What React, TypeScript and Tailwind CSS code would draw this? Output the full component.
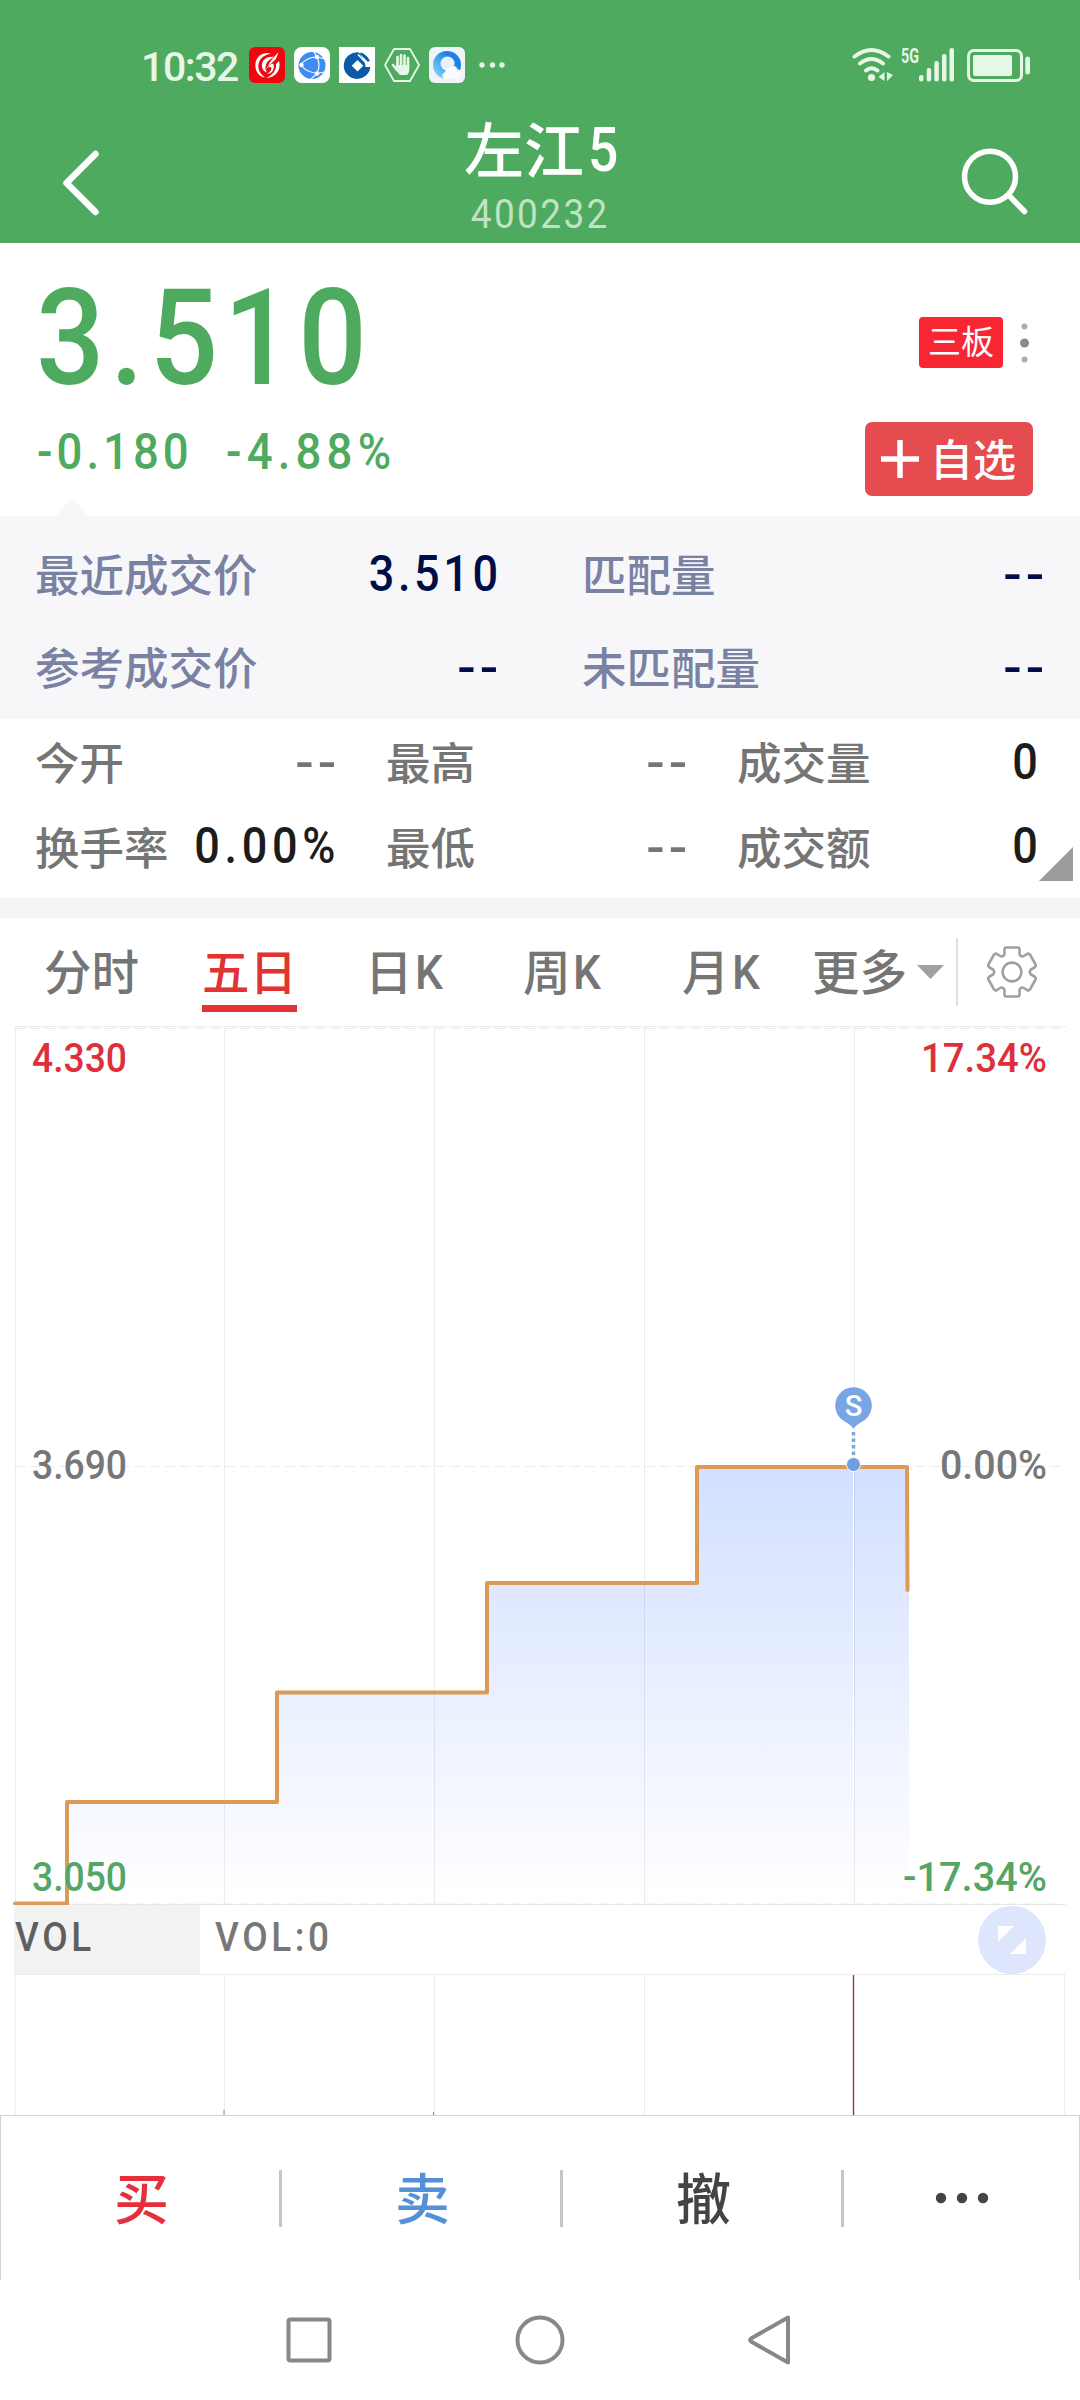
import type { ReactNode } from 'react'

const CJK = 'font-["Noto_Sans_CJK_SC",sans-serif]'

interface NumProps {
  children: ReactNode
  className?: string
}

// Narrow DIN-like figures
function Num({ children, className = '' }: NumProps) {
  return (
    <span className={`inline-block whitespace-nowrap font-[Roboto,sans-serif] leading-none ${className}`}>
      {children}
    </span>
  )
}

function StatusBar() {
  return (
    <div className="flex h-[100px] items-start justify-between pl-[141px] pr-[50px] pt-[47px] text-[#e6f7e8]">
      <div className="flex h-9 items-center gap-[9px]">
        <Num className="w-[99px] pt-1 text-[41px] font-medium tracking-[-1.4px]">10:32</Num>
        <svg width="36" height="36" viewBox="0 0 36 36">
          <rect width="36" height="36" rx="6" fill="#f0060f" />
          <g fill="#fff">
            <path d="M6.500 16C8 8 15 4.500 22 6.500C15 8 11 11 9.500 17C8.500 22 11 27 16 30.500C9 29.500 5.500 23 6.500 16Z" />
            <path d="M30 14C32.500 22 27 31 17 31C23 28.500 27.500 24 27 17Z" />
            <path d="M25 10C17 9 12 14 13 20C13.500 23 15.500 25 18 25.500C15 21 16 14 25 10Z" />
            <path d="M29.500 5L22 13.500L16 24L20 18.500L27 12Z" />
            <path d="M18 27C22 27.500 26 23 24.500 17C22.500 16 20 18 19.500 20.500C21 19.500 22.500 19.800 22.500 21.500C22 24 20 26 18 27Z" />
          </g>
        </svg>
        <svg width="36" height="36" viewBox="0 0 36 36">
          <rect width="36" height="36" rx="8" fill="#fff" />
          <circle cx="18" cy="18.500" r="13.500" fill="#3f8cf0" />
          <g fill="none" stroke="#fff" strokeWidth="1.200">
            <path d="M6.500 18Q13 10 23 10L31 12" />
            <path d="M20 5L23 10Q27 18 23 26.500L17 32" />
            <path d="M7 18Q12 25 23 26.500L30 25" />
          </g>
          <g fill="#fff">
            <circle cx="23" cy="10" r="2.200" />
            <circle cx="7.500" cy="18" r="2.200" />
            <circle cx="23" cy="26.500" r="2.200" />
          </g>
        </svg>
        <svg width="36" height="36" viewBox="0 0 36 36">
          <rect width="36" height="36" fill="#fff" />
          <path d="M20 5.500A13.300 13.300 0 1 0 31.300 20H25A7 7 0 1 1 17 12L24 12Z" fill="#0a5aa5" />
          <circle cx="18.500" cy="19" r="8" fill="#0a5aa5" />
          <path d="M18.500 13L24.300 18.800L18.500 24.600L12.700 18.800Z" fill="#fff" />
          <path d="M22.500 5.500Q28.500 8.500 31 14L28.500 14.500L20.500 6.500Z" fill="#0a5aa5" />
          <path d="M19 7.500L28 17" stroke="#fff" strokeWidth="1.500" />
        </svg>
        <svg width="36" height="36" viewBox="0 0 36 36">
          <path d="M10 2H26L35 18L26 34H10L1 18Z" fill="none" stroke="#e6f7e8" strokeWidth="1.800" strokeLinejoin="round" />
          <g stroke="#e6f7e8" strokeWidth="2.600" strokeLinecap="round">
            <path d="M13.500 10V20M17 8V20M20.500 8.500V20M24 11V20" />
            <path d="M9 18L13 23" />
          </g>
          <path d="M12.200 18H25.300V22Q25 28 22 28H16Q13 25 11 21Z" fill="#e6f7e8" />
        </svg>
        <svg width="36" height="36" viewBox="0 0 36 36">
          <defs>
            <linearGradient id="ring" x1="1" y1="0" x2="0" y2="1">
              <stop offset="0.3" stopColor="#1d7fe8" />
              <stop offset="1" stopColor="#8fe3f8" />
            </linearGradient>
          </defs>
          <rect width="36" height="36" rx="6" fill="#eef4fa" />
          <circle cx="18" cy="18" r="14" fill="url(#ring)" />
          <circle cx="18.500" cy="16.500" r="7" fill="#e9f2fb" />
          <path d="M15 32Q11 28 16 25Q17 20 22 20.500Q26 17 28.500 22Q34 24 31.500 30Q30.500 32 27 32Z" fill="#f8fbfe" />
        </svg>
        <svg className="ml-[5px]" width="30" height="36" viewBox="0 0 30 36" fill="#e6f7e8">
          <circle cx="3" cy="18" r="2.700" />
          <circle cx="13.500" cy="18" r="2.700" />
          <circle cx="23" cy="18" r="2.700" />
        </svg>
      </div>
      <svg className="-mt-[10px]" width="178" height="56" viewBox="852 37 178 56" fill="#e6f7e8">
        <g fill="none" stroke="#e6f7e8" strokeWidth="4" strokeLinecap="round">
          <path d="M854.500 56.500Q871.500 43.500 888.500 56.500" />
          <path d="M860 63.500Q871.500 54.500 883 63.500" />
          <path d="M866 70.500Q871.500 66 877.500 70.500" />
        </g>
        <circle cx="871.500" cy="77.500" r="3.600" />
        <path d="M878.500 77L884.500 72V81ZM893 75L887 72V81Z" />
        <text x="901" y="62.500" fontFamily="Roboto" fontWeight="700" fontSize="21" textLength="18" lengthAdjust="spacingAndGlyphs">5G</text>
        <rect x="919" y="75" width="4.500" height="6.500" rx="2" />
        <rect x="926.700" y="68" width="4.500" height="13.500" rx="2" />
        <rect x="934.300" y="61" width="4.500" height="20.500" rx="2" />
        <rect x="942" y="54" width="4.500" height="27.500" rx="2" />
        <rect x="949.500" y="48" width="4.500" height="33.500" rx="2" />
        <rect x="968.500" y="50.500" width="53" height="30" rx="5.500" fill="none" stroke="#e6f7e8" strokeWidth="3" />
        <rect x="973" y="55" width="39" height="21" rx="2" />
        <rect x="1025.300" y="56.500" width="4.700" height="18" rx="2.300" />
      </svg>
    </div>
  )
}

function Header() {
  return (
    <header className="h-[243px] bg-[#4eaa5e]">
      <StatusBar />
      <div className="flex items-start justify-between pl-[60px] pr-[50px]">
        <svg className="mt-12" width="43" height="70" viewBox="60 148 43 70">
          <path d="M95.500 154L66.500 183L95.500 212" fill="none" stroke="#fff" strokeWidth="6.500" strokeLinecap="round" strokeLinejoin="round" />
        </svg>
        <div className="ml-[18px] flex w-[240px] flex-col items-center pt-3">
          <h1 className="flex items-center text-[60px] font-medium leading-none text-white">
            左江
            <Num className="ml-1 w-[29px] origin-left scale-x-[0.86] pt-[7px] text-[62px]">5</Num>
          </h1>
          <Num className="mt-[13px] scale-x-90 text-[41px] tracking-[2.7px] text-[#c0e3c5]">400232</Num>
        </div>
        <svg className="mt-[46px]" width="70" height="70" viewBox="960 146 70 70">
          <g fill="none" stroke="#fff" strokeWidth="5.500" strokeLinecap="round">
            <circle cx="990" cy="176.700" r="25.500" />
            <path d="M1009 195.500L1024.500 211.500" />
          </g>
        </svg>
      </div>
    </header>
  )
}

function Price() {
  return (
    <section className="flex h-[273px] justify-between pl-9 pr-[47px]">
      <div className="relative pt-[29px] text-[#4eaa5e]">
        <Num className="block origin-left scale-x-90 text-[134px] font-medium tracking-[6.4px]">3.510</Num>
        <div className="mt-[21px] flex pl-[1px]">
          <Num className="w-[189px] origin-left scale-x-90 text-[50.5px] font-medium tracking-[4.5px]">-0.180</Num>
          <Num className="origin-left scale-x-90 text-[50.5px] font-medium tracking-[5.8px]">-4.88%</Num>
        </div>
        <svg className="absolute bottom-0 left-5" width="32" height="18" viewBox="0 0 32 18">
          <path d="M0 18L16 0L32 18Z" fill="#f7f7fa" />
        </svg>
      </div>
      <div className="flex flex-col items-end pt-[74px]">
        <div className="flex items-center gap-[17px] pr-1">
          <span className="flex h-[51px] w-[84px] items-center justify-center rounded bg-[#f82632] pb-[5px] text-[33px] leading-none text-white">
            三板
          </span>
          <svg width="9" height="42" viewBox="0 0 9 42">
            <circle cx="4.500" cy="4.500" r="3" fill="#adadad" />
            <circle cx="4.500" cy="21" r="4.500" fill="#8a8a8a" />
            <circle cx="4.500" cy="37.500" r="3" fill="#adadad" />
          </svg>
        </div>
        <button className="mt-[54px] flex h-[74px] w-[168px] items-center rounded-[7px] bg-[#e54c4f] pl-4 text-white">
          <svg width="38" height="38" viewBox="0 0 38 38">
            <path d="M0 19H38M19 0V38" stroke="#fff" strokeWidth="5.500" />
          </svg>
          <span className="ml-[11px] pb-1 text-[43px] font-medium leading-none">自选</span>
        </button>
      </div>
    </section>
  )
}

function Value({ children, className = '' }: { children: string; className?: string }) {
  if (children === '--') {
    return <Num className={`origin-right scale-x-[1.09] pt-[3px] text-[50px] font-medium tracking-[3.6px] ${className}`}>--</Num>
  }
  if (children.endsWith('%')) {
    return <Num className={`origin-right scale-x-90 text-[50px] font-medium tracking-[5.200px] ${className}`}>{children}</Num>
  }
  return <Num className={`origin-right scale-x-90 text-[50px] font-medium tracking-[4px] ${className}`}>{children}</Num>
}

function Matching() {
  const rows = [
    ['最近成交价', '3.510', '匹配量', '--'],
    ['参考成交价', '--', '未匹配量', '--'],
  ]
  return (
    <section className="h-[203px] bg-[#f7f7fa] pt-[11px] text-[44.5px] font-medium leading-none text-[#7a82a3]">
      {rows.map(([a, av, b, bv]) => (
        <div key={a} className="flex h-[93px] items-center pl-[35px] pr-8">
          <div className="flex w-[467px] items-center justify-between">
            <span>{a}</span>
            <Value className="text-[#000d48]">{av}</Value>
          </div>
          <div className="ml-20 flex flex-1 items-center justify-between">
            <span>{b}</span>
            <Value className="text-[#000d48]">{bv}</Value>
          </div>
        </div>
      ))}
    </section>
  )
}

function Quotes() {
  const cells = [
    ['今开', '--'], ['最高', '--'], ['成交量', '0'],
    ['换手率', '0.00%'], ['最低', '--'], ['成交额', '0'],
  ]
  return (
    <section className="relative h-[179px] pl-[35px] text-[44.5px] font-medium leading-none text-[#757575]">
      <div className="grid auto-rows-[84.5px] grid-cols-[351px_351px_350px]">
        {cells.map(([label, value]) => (
          <div key={label} className="flex items-center justify-between pr-[46px]">
            <span className="shrink-0">{label}</span>
            <div className="flex w-0 flex-1 justify-end pt-[1px]">
              <Value className={value === '--' ? '' : 'text-[#1c1c1c]'}>{value}</Value>
            </div>
          </div>
        ))}
      </div>
      <svg className="absolute bottom-[17px] right-[7px]" width="34" height="34" viewBox="0 0 34 34">
        <path d="M34 0V34H0Z" fill="#9c9c9c" />
      </svg>
    </section>
  )
}

function TabK({ children }: { children: ReactNode }) {
  return (
    <span className="flex items-center">
      {children}
      <Num className="ml-0.5 w-[30px] origin-left scale-x-[0.92] pt-[5px] text-[48px]">K</Num>
    </span>
  )
}

function Gear() {
  return (
    <svg width="52" height="56" viewBox="-26 -28 52 56" fill="none" stroke="#a0a0a0" strokeWidth="2.600" strokeLinejoin="round">
      <path d="M-5.500 -24.500H5.500Q7.500 -24.500 7.500 -22.500V-18Q8 -15.500 11 -15.500L15 -18Q17 -19 18.200 -17L23.300 -8Q24.500 -6 22.500 -4.500L19 -2.500Q16.500 0 19 2.500L22.500 4.500Q24.500 6 23.300 8L18.200 17Q17 19 15 18L11 15.500Q8 15.500 7.500 18V22.500Q7.500 24.500 5.500 24.500H-5.500Q-7.500 24.500 -7.500 22.500V18Q-8 15.500 -11 15.500L-15 18Q-17 19 -18.200 17L-23.300 8Q-24.500 6 -22.500 4.500L-19 2.500Q-16.500 0 -19 -2.500L-22.500 -4.500Q-24.500 -6 -23.300 -8L-18.200 -17Q-17 -19 -15 -18L-11 -15.500Q-8 -15.500 -7.500 -18V-22.500Q-7.500 -24.500 -5.500 -24.500Z" />
      <circle r="9.400" />
    </svg>
  )
}

function Tabs() {
  return (
    <nav className="flex h-[108px] items-center text-[47.5px] font-medium leading-none text-[#757575]">
      <div className="flex h-full w-[947px] items-center pb-1 pl-[44px]">
        <span className="w-[158px]">分时</span>
        <span className="relative w-[163px] text-[#e23232]">
          五日
          <i className="absolute left-0 top-[59px] h-[7px] w-[95px] bg-[#e53232]" />
        </span>
        <span className="w-[158px]"><TabK>日</TabK></span>
        <span className="w-[159px]"><TabK>周</TabK></span>
        <span className="w-[130px]"><TabK>月</TabK></span>
        <span>更多</span>
        <svg className="ml-[10px] mt-1" width="27" height="14" viewBox="0 0 27 14">
          <path d="M0 0H27L13.500 14Z" fill="#a0a0a0" />
        </svg>
      </div>
      <div className="ml-[9px] h-[68px] w-0.5 bg-[#e0e0e0]" />
      <div className="ml-[28px]"><Gear /></div>
    </nav>
  )
}

const gridX = [224.5, 434.5, 644.5, 854.5]

interface AxisLabelProps {
  x: number
  y: number
  width: number
  fill: string
  children: string
}

function AxisLabel({ x, y, width, fill, children }: AxisLabelProps) {
  return (
    <text x={x} y={y} textLength={width} lengthAdjust="spacingAndGlyphs" fill={fill} fontFamily="Roboto, sans-serif" fontWeight="500" fontSize="41">
      {children}
    </text>
  )
}

function FiveDayChart() {
  const steps = 'V1802H277V1692.500H487V1583H697V1467H907'
  return (
    <svg className="block" width="1080" height="879" viewBox="0 1026 1080 879">
      <defs>
        <linearGradient id="area" gradientUnits="userSpaceOnUse" x1="0" y1="1467" x2="0" y2="1900">
          <stop offset="0" stopColor="#d2dfff" />
          <stop offset="1" stopColor="#d2dfff" stopOpacity="0" />
        </linearGradient>
      </defs>
      <path d={`M67 1904${steps}H909V1904Z`} fill="url(#area)" />
      <g stroke="#000" strokeOpacity="0.075">
        <path d="M14 1026.500H1066" strokeWidth="1.500" />
        <path d="M15 1028.500H1065M15 1904H1065M15 1466.500H1065" strokeDasharray="10 5" />
        <path d="M14 1904.500H1066" />
        <path d="M15.500 1028V1905" />
        {gridX.map(x => (
          <path key={x} d={`M${x} 1028V1905`} />
        ))}
      </g>
      <path d={`M15 1903.500H67${steps}L907.500 1590`} fill="none" stroke="#dc9a55" strokeWidth="4" strokeLinejoin="round" strokeLinecap="round" />
      <path d="M853.500 1470V1800" stroke="#fff" />
      <path d="M853.500 1432V1456" stroke="#7fa9de" strokeWidth="3.500" strokeDasharray="3.500 3" />
      <circle cx="853.500" cy="1464.500" r="7" fill="#6f9fe0" stroke="#fff" strokeWidth="1" />
      <path d="M853.500 1428.500Q851 1425 846 1422.200A18.300 18.300 0 1 1 861 1422.200Q856 1425 853.500 1428.500Z" fill="#78a5e3" />
      <text x="853.500" y="1415.500" textAnchor="middle" fill="#fff" fontFamily="Roboto, sans-serif" fontSize="29" fontWeight="500">S</text>
      <AxisLabel x={32} y={1072} width={95} fill="#dd303b">4.330</AxisLabel>
      <AxisLabel x={921} y={1072} width={126} fill="#dd303b">17.34%</AxisLabel>
      <AxisLabel x={32} y={1479} width={95} fill="#777777">3.690</AxisLabel>
      <AxisLabel x={940} y={1479} width={107} fill="#777777">0.00%</AxisLabel>
      <AxisLabel x={32} y={1891} width={95} fill="#55a565">3.050</AxisLabel>
      <AxisLabel x={903} y={1891} width={144} fill="#55a565">-17.34%</AxisLabel>
    </svg>
  )
}

function Volume() {
  return (
    <section>
      <div className="flex h-[69px] items-center pl-[14px] pr-[34px] text-[#777777]">
        <div className="h-full w-[186px] bg-[#f2f2f2] pl-[1px] pt-3 text-[#5f5f5f]">
          <Num className="origin-left scale-x-90 text-[41px] font-medium tracking-[4px]">VOL</Num>
        </div>
        <div className="ml-[15px] h-full pt-3">
          <Num className="origin-left scale-x-90 text-[41px] font-medium tracking-[4px]">VOL:0</Num>
        </div>
        <svg className="ml-auto" width="68" height="68" viewBox="0 0 68 68">
          <circle cx="34" cy="34" r="34" fill="#dde6fc" />
          <path d="M20 20H36L20 36ZM48 32V48H32Z" fill="#fff" />
        </svg>
      </div>
      <svg className="block" width="1080" height="141" viewBox="0 1974 1080 141">
        <g stroke="#ececec">
          <path d="M14 1974.500H1065M15 1974V2115M1064.500 1974V2115" />
          {gridX.slice(0, 3).map(x => (
            <path key={x} d={`M${x} 1974V2115`} />
          ))}
        </g>
        <path d="M853.500 1975V2115" stroke="#963a42" strokeWidth="1.400" />
        <path d="M224 2110V2115M433.500 2112V2115" stroke="#c87078" />
      </svg>
    </section>
  )
}

function TradeBar() {
  const actions = [
    { label: '买', color: 'text-[#e52f3b]' },
    { label: '卖', color: 'text-[#5490d8]' },
    { label: '撤', color: 'text-[#444444]' },
  ]
  return (
    <div className="flex h-[165px] items-center border border-b-0 border-[#d2d2d2] text-[55px] font-medium leading-none">
      {actions.map(({ label, color }) => (
        <div key={label} className="flex h-[57px] w-[281px] items-center justify-center border-r-[3px] border-[#c6c6c6] pl-[3px]">
          <span className={`-mt-[5px] ${color}`}>{label}</span>
        </div>
      ))}
      <svg className="ml-[91px]" width="54" height="12" viewBox="0 0 54 12" fill="#444444">
        <circle cx="6" cy="6" r="5.200" />
        <circle cx="27" cy="6" r="5.200" />
        <circle cx="48" cy="6" r="5.200" />
      </svg>
    </div>
  )
}

function SystemNav() {
  return (
    <div className="flex h-[120px] items-center gap-[183px] pl-[286px]">
      <svg width="46" height="50" viewBox="-23 -25 46 50" fill="none" stroke="#888888" strokeWidth="4">
        <rect x="-20.500" y="-20.500" width="41" height="41" rx="2" />
      </svg>
      <svg width="50" height="50" viewBox="-25 -25 50 50" fill="none" stroke="#888888" strokeWidth="4">
        <circle r="22.500" />
      </svg>
      <svg width="42" height="50" viewBox="748 -25 42 50" fill="none" stroke="#888888" strokeWidth="4" strokeLinejoin="round">
        <path d="M788 -22.500V22.500L751 1.500Q749.500 0 751 -1.500Z" />
      </svg>
    </div>
  )
}

export default function App() {
  return (
    <div className={`h-[2400px] w-[1080px] overflow-hidden bg-white ${CJK}`}>
      <Header />
      <Price />
      <Matching />
      <Quotes />
      <div className="h-5 bg-[#f4f4f4]" />
      <Tabs />
      <FiveDayChart />
      <Volume />
      <TradeBar />
      <SystemNav />
    </div>
  )
}
